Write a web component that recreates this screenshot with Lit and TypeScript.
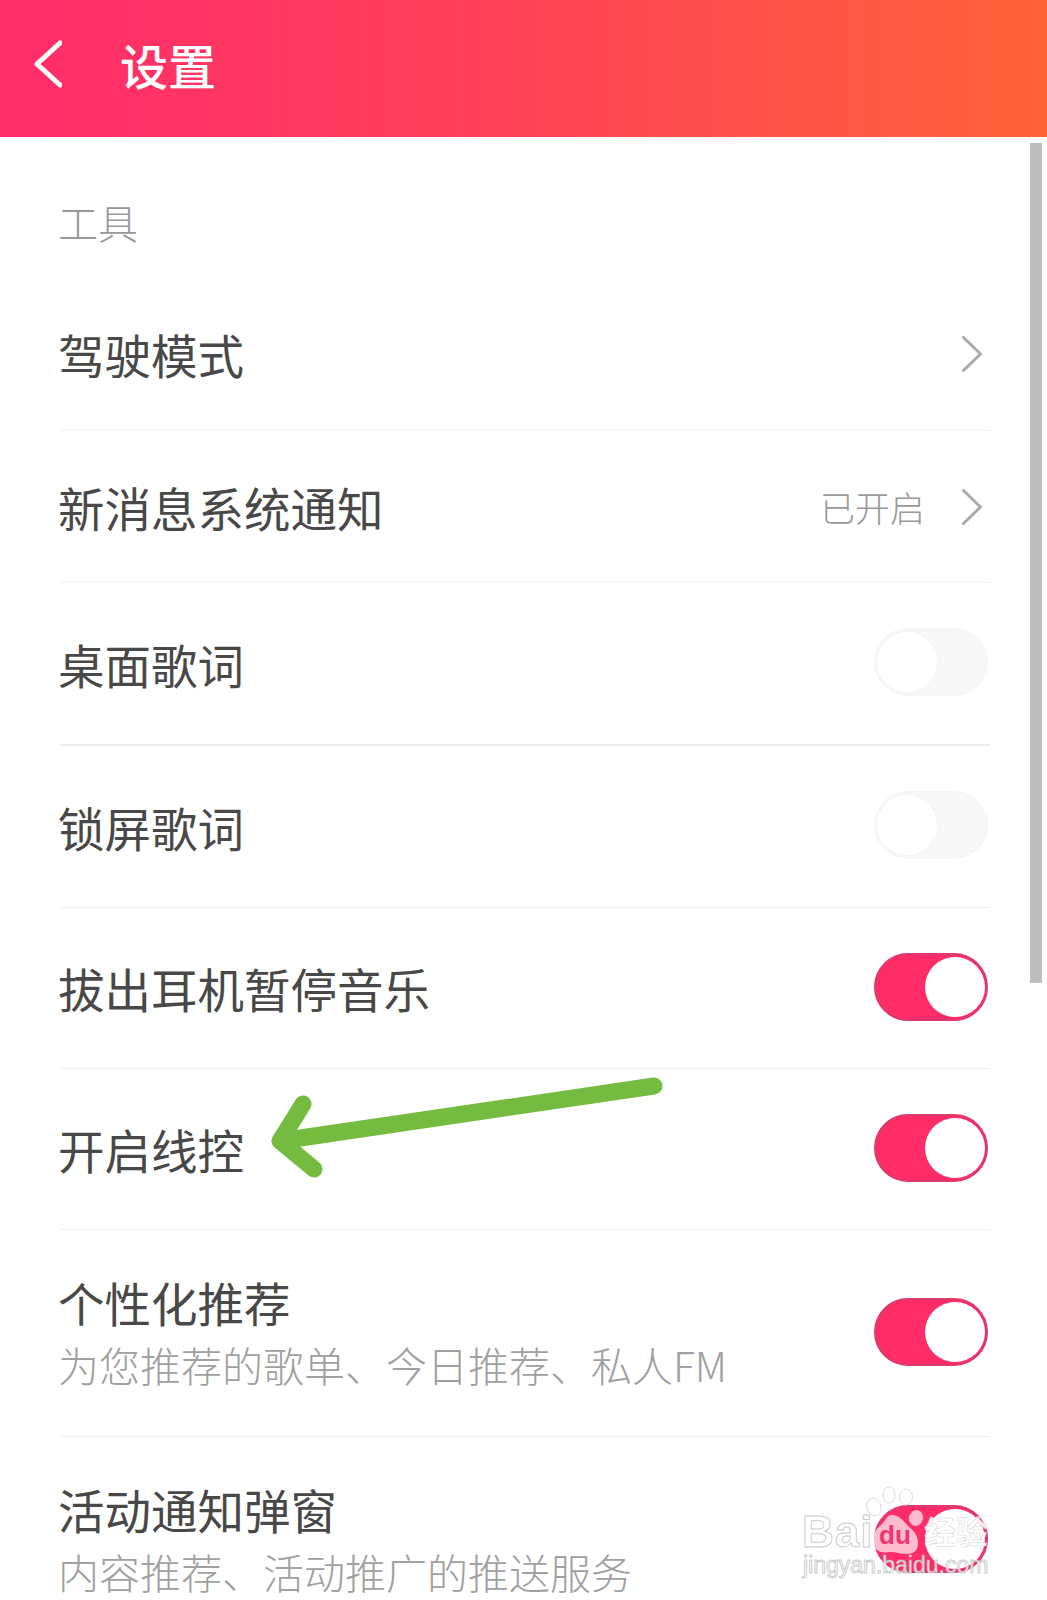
import { LitElement, html, css, svg, nothing } from 'lit';
import { customElement } from 'lit/decorators.js';
import { styleMap } from 'lit/directives/style-map.js';

type Row = {
  title: string;
  sub?: string;
  value?: string;
  kind: 'link' | 'on' | 'off';
  height: number;
  strong?: boolean;
};

const ROWS: Row[] = [
  { title: '驾驶模式', kind: 'link', height: 153 },
  { title: '新消息系统通知', value: '已开启', kind: 'link', height: 152 },
  { title: '桌面歌词', kind: 'off', height: 163, strong: true },
  { title: '锁屏歌词', kind: 'off', height: 162 },
  { title: '拔出耳机暂停音乐', kind: 'on', height: 161 },
  { title: '开启线控', kind: 'on', height: 161 },
  { title: '个性化推荐', sub: '为您推荐的歌单、今日推荐、私人FM', kind: 'on', height: 207 },
  { title: '活动通知弹窗', sub: '内容推荐、活动推广的推送服务', kind: 'on', height: 207 },
];

@customElement('app-root')
export class AppRoot extends LitElement {
  static styles = css`
    :host {
      display: block;
      position: relative;
      height: 1600px;
      overflow: hidden;
      background: #fff;
      font-family: "Noto Sans CJK SC", "Noto Sans", sans-serif;
      color: #444;
    }
    .header {
      height: 137px;
      display: flex;
      align-items: center;
      gap: 58px;
      padding: 0 0 9px 34px;
      box-sizing: border-box;
      background: linear-gradient(90deg, #ff2c6a 0%, #ff3f5a 45%, #ff6338 100%);
      color: #fff;
    }
    .back { display: block; width: 28px; height: 48px; }
    .header-title { font-size: 48px; font-weight: 500; line-height: 1; }
    .section {
      height: 141px;
      box-sizing: border-box;
      padding: 63px 0 0 58px;
      font-size: 40px;
      line-height: 44px;
      font-weight: 300;
      color: #999;
    }
    .list { margin: 0 57px 0 60px; }
    .row {
      display: flex;
      align-items: center;
      justify-content: space-between;
      box-sizing: border-box;
      border-bottom: 1px solid #f0f0f0;
    }
    .row.strong { border-bottom: 2px solid #ececec; }
    .text { margin-left: -2px; }
    .title { font-size: 46.5px; line-height: 56px; font-weight: 400; color: #484848; }
    .sub {
      margin-top: 10px;
      padding-bottom: 5px;
      font-size: 41px;
      line-height: 48px;
      font-weight: 300;
      color: #a0a0a0;
    }
    .end { display: flex; align-items: center; gap: 37px; margin-right: 8px; }
    .value { font-size: 35px; font-weight: 300; color: #989898; }
    .chev { display: block; width: 20px; height: 36px; }
    .toggle {
      width: 114px;
      height: 68px;
      margin: 0 2px 3px 0;
      box-sizing: border-box;
      border-radius: 34px;
      display: flex;
      align-items: center;
    }
    .toggle.on {
      background: #ff2c68;
      border: 2px solid #dc3a6c;
      justify-content: flex-end;
    }
    .toggle.off {
      background: #f7f7f7;
      border: 2px solid #f6f6f6;
    }
    .knob {
      width: 60px;
      height: 60px;
      border-radius: 50%;
      background: #fff;
      margin: 0 1px;
    }
    .off .knob { box-shadow: 0 0 0 1px #f4f4f4; }
    .scrollbar {
      position: absolute;
      left: 1030px;
      top: 143px;
      width: 12px;
      height: 840px;
      background: #bdbdbd;
    }
    .arrow { position: absolute; left: 260px; top: 1070px; width: 410px; height: 115px; }
    .mark {
      position: absolute;
      left: 800px;
      top: 1484px;
      width: 200px;
      height: 100px;
      color: rgba(255, 255, 255, 0.85);
      font-family: "Liberation Sans", sans-serif;
    }
    .paw { position: absolute; left: 62px; top: 0; width: 70px; height: 72px; }
    .bai, .jing, .du, .exp {
      position: absolute;
      white-space: nowrap;
      -webkit-text-stroke: 1px rgba(180, 180, 180, 0.7);
    }
    .bai { left: 2px; top: 24px; font-size: 44px; line-height: 48px; font-weight: 700; letter-spacing: 1px; }
    .du {
      left: 79px;
      top: 37px;
      font-size: 26px;
      line-height: 28px;
      font-weight: 700;
      color: #f0356f;
      -webkit-text-stroke: 0;
    }
    .exp {
      left: 124px;
      top: 26px;
      font-size: 32px;
      line-height: 40px;
      font-weight: 700;
      font-family: "Noto Sans CJK SC", sans-serif;
      -webkit-text-stroke: 0.5px rgba(180, 180, 180, 0.6);
    }
    .jing { left: 3px; top: 67px; font-size: 23px; line-height: 28px; }
  `;

  render() {
    return html`
      <div class="header">
        <svg class="back" viewBox="0 0 28 48" fill="none" stroke="#fff" stroke-width="5" stroke-linecap="round" stroke-linejoin="round">
          <path d="M26 3 L3 24 L26 45" />
        </svg>
        <div class="header-title">设置</div>
      </div>
      <div class="section">工具</div>
      <div class="list">${ROWS.map((r) => this._renderRow(r))}</div>
      <div class="scrollbar"></div>
      <svg class="arrow" viewBox="0 0 410 115" fill="none" stroke="#74bb3f" stroke-width="17" stroke-linecap="round" stroke-linejoin="round">
        <path d="M394 16 L20 71 M43 34 L20 71 L54 99" />
      </svg>
      ${this._renderMark()}
    `;
  }

  _renderRow(r: Row) {
    const style = { height: `${r.height}px` };
    return html`
      <div class="row ${r.strong ? 'strong' : ''}" style=${styleMap(style)}>
        <div class="text">
          <div class="title">${r.title}</div>
          ${r.sub ? html`<div class="sub">${r.sub}</div>` : nothing}
        </div>
        ${r.kind === 'link'
          ? html`<div class="end">
              ${r.value ? html`<span class="value">${r.value}</span>` : nothing}
              <svg class="chev" viewBox="0 0 20 36" fill="none" stroke="#aaa" stroke-width="3" stroke-linecap="round" stroke-linejoin="round">
                <path d="M1.5 1.5 L18.5 18 L1.5 34.5" />
              </svg>
            </div>`
          : html`<div class="toggle ${r.kind}"><div class="knob"></div></div>`}
      </div>
    `;
  }

  _renderMark() {
    return html`
      <div class="mark">
        <svg class="paw" viewBox="0 0 70 72">
          ${svg`
            <g fill="rgba(255,255,255,0.68)">
              <ellipse cx="12" cy="23" rx="7" ry="9" transform="rotate(-20 12 23)" stroke="#ddd" />
              <ellipse cx="27" cy="11" rx="6" ry="8" stroke="#ddd" />
              <ellipse cx="44" cy="13" rx="6.5" ry="8" stroke="#ddd" />
              <ellipse cx="54" cy="34" rx="7" ry="8" transform="rotate(20 54 34)" />
              <path d="M30 31 C37 31 42 37 46 42 C52 47 56 51 56 59 C56 68 50 70 44 70 C38 70 34 68 29 68 C22 69 11 69 11 56 C11 47 16 44 20 40 C24 36 25 31 30 31 Z" />
            </g>
          `}
        </svg>
        <span class="bai">Bai</span>
        <span class="du">du</span>
        <span class="exp">经验</span>
        <span class="jing">jingyan.baidu.com</span>
      </div>
    `;
  }
}
